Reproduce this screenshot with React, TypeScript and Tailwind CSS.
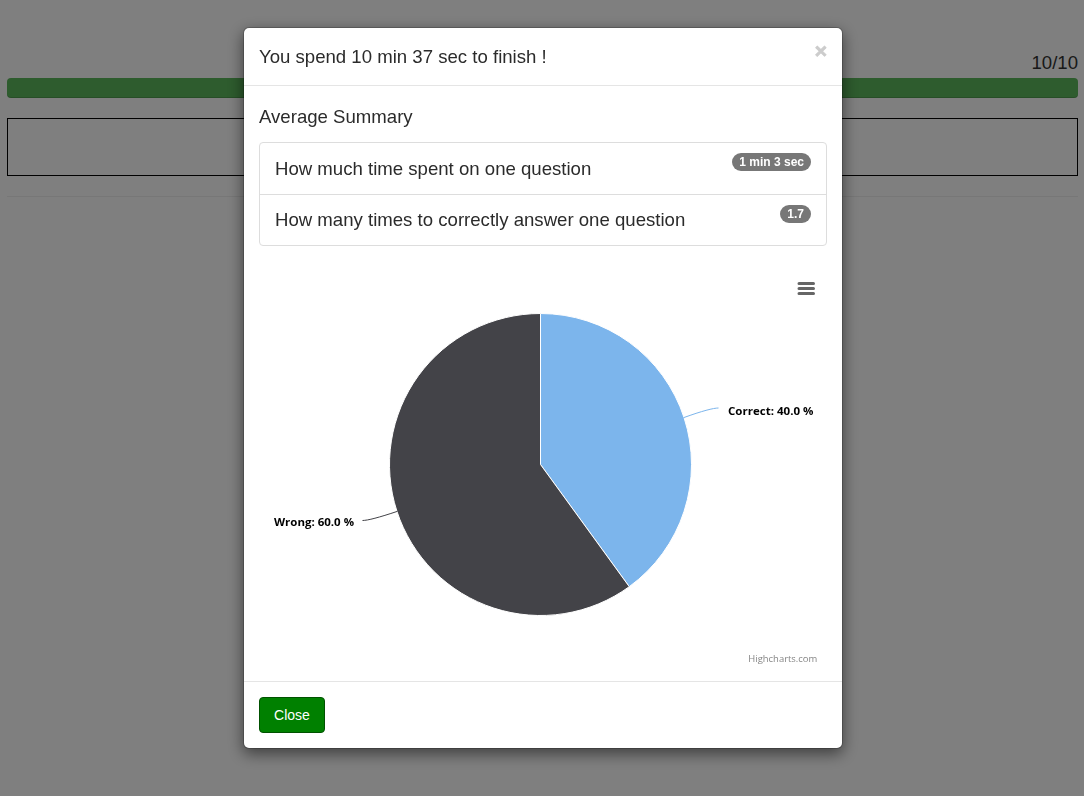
import React from "react";

const rows = [
  { label: "How much time spent on one question", value: "1 min 3 sec" },
  { label: "How many times to correctly answer one question", value: "1.7" },
];

function ResultPie() {
  return (
    <svg width="568" height="400" viewBox="259 266 568 400" className="block">
      <g stroke="#ffffff" strokeWidth="1" strokeLinejoin="round">
        <path d="M540.5 464.5 L540.5 313.5 A151 151 0 0 1 629.26 586.66 Z" fill="#7cb5ec" />
        <path d="M540.5 464.5 L629.26 586.66 A151 151 0 1 1 540.5 313.5 Z" fill="#434348" />
      </g>
      <path d="M718.5 408 C713.5 408 702 411 683.5 417.7" fill="none" stroke="#7cb5ec" />
      <path d="M362.5 520.5 C367.5 520.5 379 517.5 397.5 511.3" fill="none" stroke="#434348" />
      <g className="font-['Open_Sans','Noto_Sans',sans-serif] text-[11px] font-bold" fill="#000000">
        <text x="728" y="415" textLength="85.5" lengthAdjust="spacingAndGlyphs">Correct: 40.0 %</text>
        <text x="274" y="526" textLength="80" lengthAdjust="spacingAndGlyphs">Wrong: 60.0 %</text>
      </g>
      <path d="M799 283.5H813.5 M799 288.5H813.5 M799 293.5H813.5" stroke="#666666" strokeWidth="3" strokeLinecap="round" />
      <text
        x="748.3"
        y="662"
        textLength="69"
        lengthAdjust="spacingAndGlyphs"
        className="font-['Open_Sans','Noto_Sans',sans-serif] text-[9.5px]"
        fill="#858585"
      >
        Highcharts.com
      </text>
    </svg>
  );
}

export default function App() {
  return (
    <div className="h-[796px] w-[1084px] overflow-hidden bg-white font-['Liberation_Sans',Arial,sans-serif] text-[#333]">
      <main className="pt-[52px] pr-[6px] pl-[7px]">
        <div className="h-[26px] text-right text-[18.6px] leading-[21px]">10/10</div>
        <div className="h-5 rounded bg-[#5cb85c] shadow-[inset_0_-1px_0_rgba(0,0,0,0.15)]" />
        <div className="mt-5 h-[58px] border border-black" />
        <hr className="mt-5 border-t border-[#eee]" />
      </main>

      <div className="fixed inset-0 flex items-start bg-black/50 pt-[27px] pl-[243px]">
        <section
          role="dialog"
          className="flex h-[722px] w-[600px] flex-col rounded-md border border-black/20 bg-white bg-clip-padding shadow-[0_5px_15px_rgba(0,0,0,0.5)]"
        >
          <header className="flex h-[58px] items-start justify-between border-b border-[#e5e5e5] px-[15px] pt-[15px]">
            <h4 className="text-[18.6px] leading-[27px] text-[#2b2b2b]">You spend 10 min 37 sec to finish !</h4>
            <button className="-mt-[3px] text-[21px] leading-[21px] font-bold text-[#ccc] [-webkit-text-stroke:0.8px_#ccc]">×</button>
          </header>

          <div className="flex h-[595px] flex-col px-[15px] pt-[20px]">
            <h4 className="h-5 text-[18.6px] leading-[21px] text-[#2b2b2b]">Average Summary</h4>
            <ul className="mt-[16px] h-[104px] divide-y divide-[#ddd] rounded border border-[#ddd]">
              {rows.map((row) => (
                <li key={row.label} className="flex h-[51px] items-start justify-between px-[15px] pt-[10px] first:h-[52px]">
                  <span className="mt-[5px] h-5 text-[18.6px] leading-[21px] text-[#2b2b2b] [li:last-child>&]:mt-[4px]">{row.label}</span>
                  <span className="h-[18px] rounded-[10px] bg-[#777] px-[7px] pt-[3px] text-[12px] leading-[12px] font-bold text-white">
                    {row.value}
                  </span>
                </li>
              ))}
            </ul>
            <div className="mt-5">
              <ResultPie />
            </div>
          </div>

          <footer className="h-[67px] border-t border-[#e5e5e5] p-[15px]">
            <button className="h-[36px] w-[66px] rounded border border-[#005200] bg-[#008000] text-[14px] leading-[20px] text-white">
              Close
            </button>
          </footer>
        </section>
      </div>
    </div>
  );
}
